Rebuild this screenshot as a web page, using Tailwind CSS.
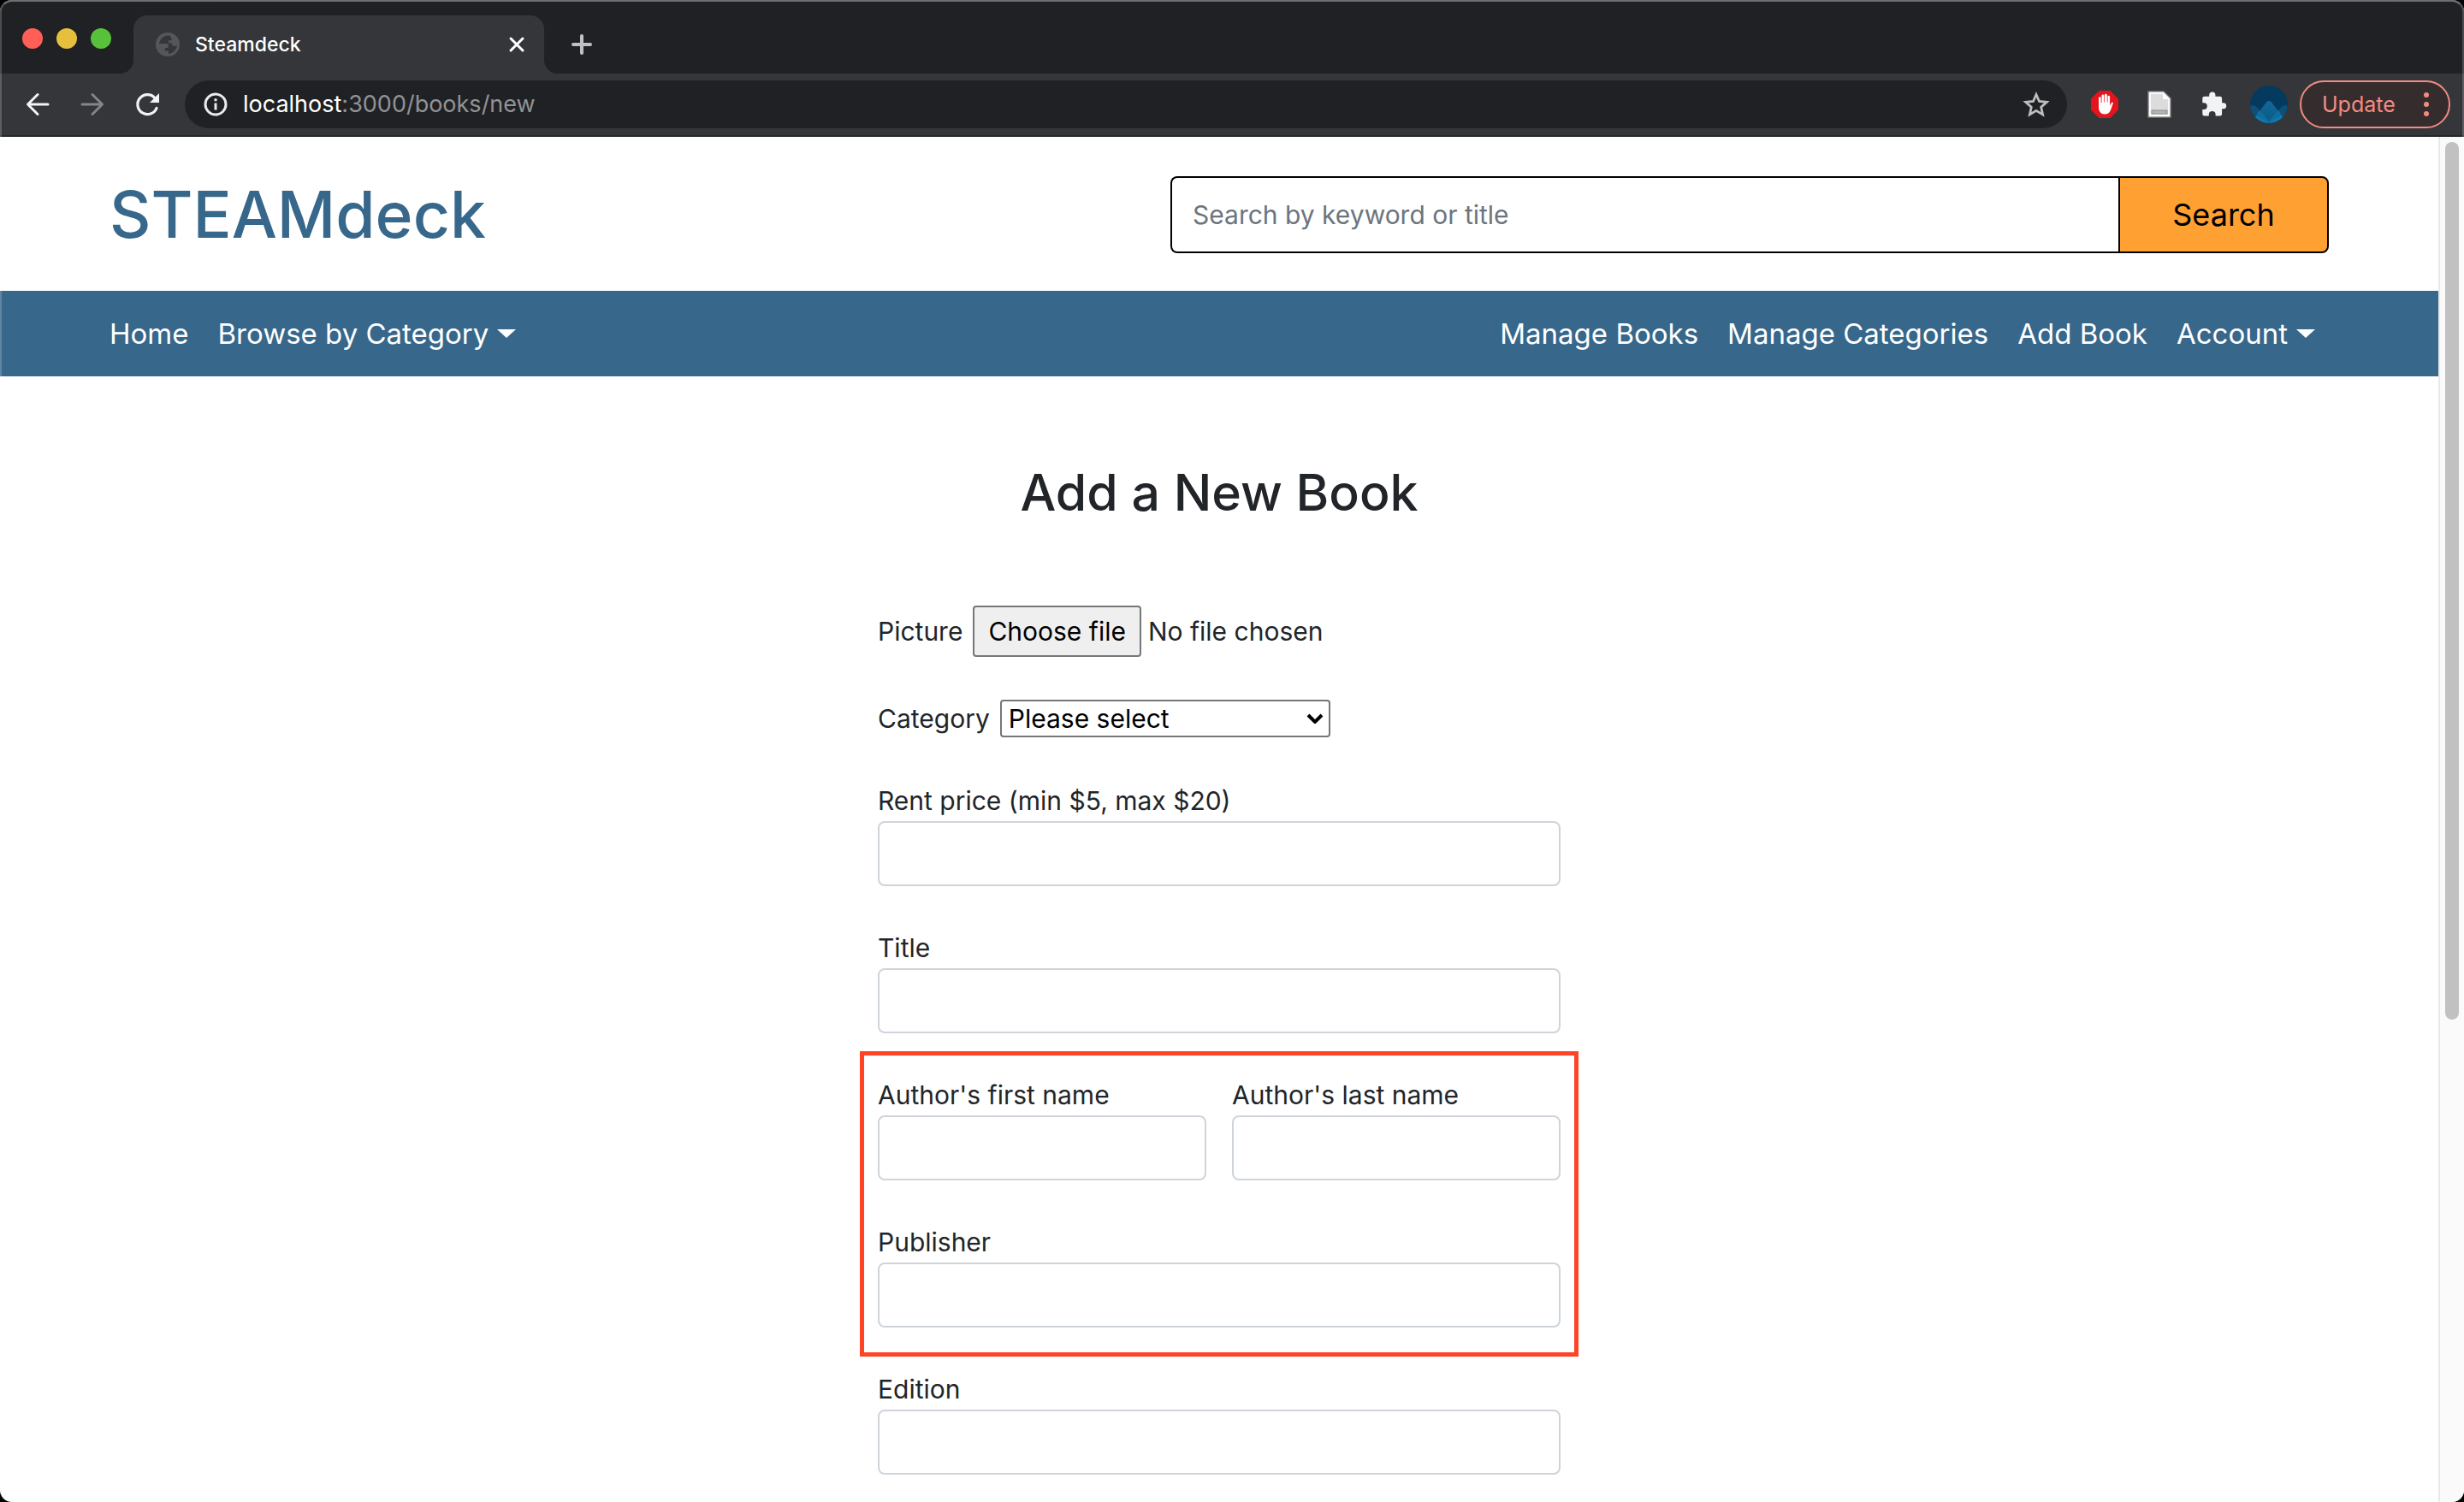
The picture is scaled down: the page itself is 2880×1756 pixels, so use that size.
<!DOCTYPE html>
<html lang="en">
<head>
<meta charset="utf-8">
<title>Steamdeck</title>
<script src="https://cdn.jsdelivr.net/npm/@tailwindcss/browser@4"></script>
</head>
<body class="bg-black font-[Inter,'Liberation_Sans',sans-serif] text-[30px]/[48px] text-[#212529]">
<div class="relative flex min-h-screen flex-col overflow-hidden rounded-[14px] bg-white">

  <!-- Tab strip -->
  <div class="flex h-[86px] items-end bg-[#202124]">
    <div class="flex h-[82px] w-[156px] shrink-0 items-center gap-4 pl-[26px]">
      <button aria-label="Close window" class="size-6 rounded-full bg-[#ff5f57]"></button>
      <button aria-label="Minimise window" class="size-6 rounded-full bg-[#e6bf3c]"></button>
      <button aria-label="Zoom window" class="size-6 rounded-full bg-[#58c13a]"></button>
    </div>
    <div class="relative flex h-[68px] w-[480px] items-center rounded-t-2xl bg-[#35363a] pl-[26px] pr-5">
      <span class="absolute bottom-0 -left-4 size-4 bg-[radial-gradient(circle_at_0_0,transparent_16px,#35363a_16px)]"></span>
      <span class="absolute bottom-0 -right-4 size-4 bg-[radial-gradient(circle_at_100%_0,transparent_16px,#35363a_16px)]"></span>
      <svg class="size-7" viewBox="0 0 28 28" fill="none">
        <circle cx="14" cy="14" r="14" fill="#53565a"/>
        <path d="M4 13h9c1.500 0 2.300 1.400 1.800 2.700L14 18h-3.200v3.500h4V25A11.200 11.200 0 0 0 25 14.500c-1.800 1.700-4 1.800-5.800.5v-2.500h-3.600l-1-3.200h4V7.500l-1.700-3.800A11 11 0 0 0 4 13z" fill="#35363a"/>
      </svg>
      <span class="ml-[18px] flex-1 text-[23px]/8 font-medium text-white">Steamdeck</span>
      <button aria-label="Close tab" class="flex size-6 items-center justify-center">
        <svg class="size-5" viewBox="0 0 20 20" stroke="#fff" stroke-width="3" stroke-linecap="round"><path d="M3 3l14 14M17 3L3 17"/></svg>
      </button>
    </div>
    <button aria-label="New tab" class="ml-8 flex h-[68px] items-center">
      <svg class="size-6" viewBox="0 0 24 24" stroke="#bdc1c6" stroke-width="4" stroke-linecap="round"><path d="M12 2v20M2 12h20"/></svg>
    </button>
  </div>

  <!-- Toolbar -->
  <div class="flex h-[74px] items-center border-b-2 border-[#27282b] bg-[#35363a] px-4">
    <div class="ml-3 flex gap-8">
      <button aria-label="Back"><svg class="size-8" viewBox="0 0 32 32" fill="none" stroke="#f1f3f4" stroke-width="3" stroke-linecap="round" stroke-linejoin="round"><path d="M28 16H5M16 4.500L4.500 16 16 27.500"/></svg></button>
      <button aria-label="Forward"><svg class="size-8" viewBox="0 0 32 32" fill="none" stroke="#848588" stroke-width="3" stroke-linecap="round" stroke-linejoin="round"><path d="M4 16h23M16 4.500L27.500 16 16 27.500"/></svg></button>
      <button aria-label="Reload"><svg class="size-8" viewBox="0 0 32 32"><path d="M27 20.500A11.500 11.500 0 1 1 25 8.500" fill="none" stroke="#f1f3f4" stroke-width="3.200" stroke-linecap="round"/><path d="M30 3v11H19z" fill="#f1f3f4"/></svg></button>
    </div>
    <div class="ml-7 flex h-14 flex-1 items-center rounded-full bg-[#202124] pl-5 pr-5">
      <svg class="size-8" viewBox="0 0 32 32" fill="none"><circle cx="16" cy="16" r="12" stroke="#e8eaed" stroke-width="3"/><path d="M16 14.500v8" stroke="#e8eaed" stroke-width="3"/><path d="M16 9.300v3" stroke="#e8eaed" stroke-width="3"/></svg>
      <div class="ml-4 flex-1 text-[27px]/9 text-[#919396]"><span class="text-white">localhost</span>:3000/books/new</div>
      <button aria-label="Bookmark this page"><svg class="size-8" viewBox="0 0 32 32" fill="none"><path d="M16 4.500l3.500 8 8.800.8-6.600 5.900 1.900 8.700-7.600-4.500-7.600 4.500 1.900-8.700-6.600-5.900 8.800-.8z" stroke="#bdbdbd" stroke-width="2.800"/></svg></button>
    </div>
    <div class="ml-7 flex items-center gap-8">
      <button aria-label="Ad blocker">
        <svg class="size-8" viewBox="0 0 32 32"><path d="M9.500 0h13L32 9.500v13L22.500 32h-13L0 22.500v-13z" fill="#e5131d"/><path d="M9 19V8.500a1.300 1.300 0 0 1 2.700 0V14h.8V6a1.400 1.400 0 0 1 2.800 0v7.500h.7V5.200a1.400 1.400 0 0 1 2.800 0v8.300h.7V7a1.300 1.300 0 0 1 2.600 0v10.500l1.800-3.300c.6-1.100 2-.9 2 .1-1.200 4-2 6.500-3.300 9.200C21 26.500 19 27.500 16 27.500c-4.500 0-7-3-7-8.500z" fill="#fff"/></svg>
      </button>
      <button aria-label="Document tool">
        <svg class="size-8" viewBox="0 0 32 32"><path d="M3 1h18l8 8v22H3z" fill="#dcdcdc" stroke="#77787a" stroke-width="1.500"/><path d="M4.800 2.800h15.400l7 7v19.400H4.800z" fill="none" stroke="#fff" stroke-width="2"/><path d="M20 2v8h8z" fill="#fff"/><rect x="7" y="23" width="18" height="4" fill="#b4b4b4" stroke="#8c8c8c"/></svg>
      </button>
      <button aria-label="Extensions">
        <svg class="size-8" viewBox="0 0 32 32"><path d="M8.300 6.700H4.600A2.300 2.300 0 0 0 2.300 9v5.200h1.600a3.900 3.900 0 0 1 0 7.800H2.300v5.200a2.300 2.300 0 0 0 2.300 2.300h5.200v-1.700a3.900 3.900 0 0 1 7.800 0v1.700h5.200a2.300 2.300 0 0 0 2.300-2.300v-6h1.600a3.500 3.500 0 0 0 0-7h-1.600V9a2.300 2.300 0 0 0-2.300-2.300h-5.400V5a3.600 3.600 0 0 0-7.200 0v1.700z" fill="#f1f3f4"/></svg>
      </button>
    </div>
    <button aria-label="Profile" class="ml-[26px]">
      <svg class="size-11" viewBox="0 0 44 44">
        <defs>
          <clipPath id="disc"><circle cx="22" cy="22" r="22"/></clipPath>
          <linearGradient id="peak" x1="0" y1="0" x2="0" y2="1"><stop offset="0" stop-color="#12679a"/><stop offset="1" stop-color="#0b5c86"/></linearGradient>
        </defs>
        <g clip-path="url(#disc)">
          <path d="M0 0h44v44H0z" fill="#053a5f"/>
          <path d="M-6 32L0 24.500q3.500-3 7 0L22 42 37 24.500q3.500-3 7 0l6 7.500v14H-6z" fill="#0d4f79"/>
          <path d="M8 34L19 19.500q3-3.500 6 0L36 34 22 42z" fill="url(#peak)"/>
          <path d="M8 34l14 9 14-9 4 5v7H4v-7z" fill="#1078aa"/>
          <path d="M8 33l3-4 11 13 11-13 3 4-14 11z" fill="#0f6f9e"/>
        </g>
      </svg>
    </button>
    <button class="ml-3.5 flex h-14 w-44 items-center justify-between rounded-full border-2 border-[#f28b82] bg-[#352c2e] pl-6 pr-5 text-[25px]/8 text-[#f28b82]">
      Update
      <svg class="h-8 w-3" viewBox="0 0 12 32" fill="#f28b82"><circle cx="6" cy="5" r="3"/><circle cx="6" cy="16" r="3"/><circle cx="6" cy="27" r="3"/></svg>
    </button>
  </div>

  <!-- Viewport -->
  <div class="flex flex-1">
    <div class="flex-1">
      <header class="flex h-[180px] items-center justify-between px-32 pt-0.5">
        <a href="#" class="text-[75px]/[90px] font-medium text-[#37678b]">STEAMdeck</a>
        <form class="flex h-[90px] w-[1354px]">
          <input type="search" aria-label="Search by keyword or title" placeholder="Search by keyword or title" class="min-w-0 flex-1 rounded-l-lg border-2 border-r-0 border-black px-6 placeholder:text-[#6c757d]">
          <button type="button" class="w-[246px] rounded-r-lg border-2 border-black bg-[#ffa033] text-[36px] text-black">Search</button>
        </form>
      </header>

      <nav class="flex h-[100px] items-center justify-between bg-[#37678b] px-32 text-[33px]/[50px] text-white">
        <div class="flex items-center gap-[34px]">
          <a href="#">Home</a>
          <a href="#" class="flex items-center gap-2.5">Browse by Category
            <svg class="h-2.5 w-5.5" viewBox="0 0 22 10" fill="#fff"><path d="M0 0h22L11 10z"/></svg></a>
        </div>
        <div class="flex items-center gap-[34px] pr-4">
          <a href="#">Manage Books</a>
          <a href="#">Manage Categories</a>
          <a href="#">Add Book</a>
          <a href="#" class="flex items-center gap-2.5">Account
            <svg class="h-2.5 w-5.5" viewBox="0 0 22 10" fill="#fff"><path d="M0 0h22L11 10z"/></svg></a>
        </div>
      </nav>

      <main class="mx-auto w-[798px] pt-24 pb-8">
        <h1 class="text-center text-[59px]/[80px] font-medium">Add a New Book</h1>
        <form class="mt-23 flex flex-col gap-12">
          <div class="flex items-center gap-3">
            <label for="picture">Picture</label>
            <div class="relative flex items-center gap-2">
              <span class="flex h-[60px] items-center rounded border-2 border-[#767676] bg-[#efefef] px-4 text-black">Choose file</span>
              <span>No file chosen</span>
              <input id="picture" type="file" class="absolute inset-0 opacity-0">
            </div>
          </div>
          <div class="flex items-center gap-3">
            <label for="category">Category</label>
            <div class="relative flex h-12 items-center">
              <select id="category" class="h-11 w-[386px] appearance-none rounded border-2 border-[#767676] bg-white pl-2 text-[30px]/10 text-black"><option>Please select</option></select>
              <svg class="pointer-events-none absolute right-2 h-3 w-5" viewBox="0 0 20 12" fill="none" stroke="#000" stroke-width="4"><path d="M2 2l8 8 8-8"/></svg>
            </div>
          </div>
          <div>
            <label for="price" class="block">Rent price (min $5, max $20)</label>
            <input id="price" type="text" class="block h-19 w-full rounded-lg border-2 border-[#ced4da] px-6">
          </div>
          <div>
            <label for="title" class="block">Title</label>
            <input id="title" type="text" class="block h-19 w-full rounded-lg border-2 border-[#ced4da] px-6">
          </div>
          <div class="relative flex flex-col gap-12">
            <div class="pointer-events-none absolute -inset-x-[21px] -top-[27px] -bottom-[34px] border-5 border-[#ff4326]"></div>
            <div class="grid grid-cols-2 gap-[30px]">
              <div>
                <label for="first" class="block">Author's first name</label>
                <input id="first" type="text" class="block h-19 w-full rounded-lg border-2 border-[#ced4da] px-6">
              </div>
              <div>
                <label for="last" class="block">Author's last name</label>
                <input id="last" type="text" class="block h-19 w-full rounded-lg border-2 border-[#ced4da] px-6">
              </div>
            </div>
            <div>
              <label for="publisher" class="block">Publisher</label>
              <input id="publisher" type="text" class="block h-19 w-full rounded-lg border-2 border-[#ced4da] px-6">
            </div>
          </div>
          <div>
            <label for="edition" class="block">Edition</label>
            <input id="edition" type="text" class="block h-19 w-full rounded-lg border-2 border-[#ced4da] px-6">
          </div>
        </form>
      </main>
    </div>

    <!-- Scrollbar -->
    <div class="w-[30px] border-l-2 border-[#e8e8e8] bg-[#fafafa] pt-1.5 pl-1.5">
      <div class="h-[1026px] w-4 rounded-full bg-[#c1c1c1]"></div>
    </div>
  </div>

  <!-- Window edge highlight -->
  <div class="pointer-events-none absolute inset-0 rounded-[14px] border-2 border-white/20 border-t-white/35"></div>
</div>
</body>
</html>
